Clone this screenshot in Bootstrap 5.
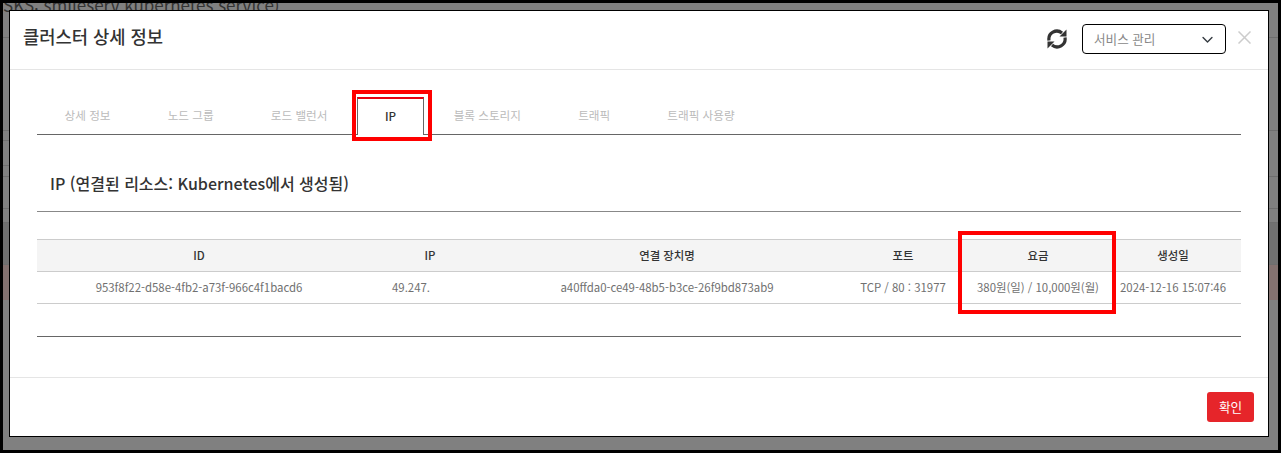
<!doctype html>
<html lang="ko"><head><meta charset="utf-8">
<link href="https://cdn.jsdelivr.net/npm/bootstrap@5.3.0/dist/css/bootstrap.min.css" rel="stylesheet">
<style>
html,body{height:453px;overflow:hidden}
body{font-family:"Noto Sans CJK KR","Noto Sans",sans-serif;background:#808080;color:#333}
.shot{position:relative;height:453px;border:3px solid #000;padding:7px 9px 13px 6px;overflow:hidden}
.behind{position:absolute;inset:0;overflow:hidden}
.behind-t{position:absolute;left:0;top:-10px;font-size:17px;color:#333;white-space:nowrap;line-height:24px}
.rw{border-bottom:1px solid #6e6e6e}
.rw-short{width:8px}
.rw-tint{background:#717171}
.rw-red{background:#847270}
.dlg{position:relative;height:427px;border:1px solid #000;background:#fff;display:flex;flex-direction:column}
.dlg-head{height:59px;padding:0 17px 2px 13px;border-bottom:1px solid #e5e5e5}
.dlg-title{font-size:17.7px;font-weight:500;color:#333;margin:0 0 5px}
.svc{width:144px;height:30px;border:1px solid #000;border-radius:4px;font-size:12.6px;color:#888;padding:0 36px 0 11px;margin-left:14px;
 background:#fff url("data:image/svg+xml,%3csvg xmlns='http://www.w3.org/2000/svg' viewBox='0 0 16 16'%3e%3cpath fill='none' stroke='%23343a40' stroke-linecap='round' stroke-linejoin='round' stroke-width='2' d='m1.5 5 6.5 6.5L14.500 5'/%3e%3c/svg%3e") no-repeat right 11px center/13px 11px;appearance:none}
.dlg-x{margin-left:12px;margin-bottom:4px;display:block}
.dlg-body{flex:1;padding:0 27px}
.tabs-row{height:65px;align-items:flex-end;border-bottom:1px solid #666;gap:2px}
.tab-i{height:37px;display:flex;align-items:center;padding:0 27.6px;font-size:11.6px;color:#bbb;text-decoration:none;white-space:nowrap}
.tab-i.on{padding:0 27px;margin-bottom:-1px;height:38px;border:1px solid #666;border-top:2px solid #e60012;border-bottom:0;background:#fff;color:#333;font-weight:500}
.sec-h{font-size:16px;font-weight:500;color:#333;height:77px;margin:0;padding:22px 13px 0;display:flex;align-items:center;border-bottom:1px solid #888}
.ip-t{margin:27px 0 0;font-size:11.4px;table-layout:fixed;width:100%;border-top:1px solid #ccc}
.ip-t th{background:#f4f4f4;font-weight:500;color:#333;height:32px;padding:0;text-align:center;vertical-align:middle;border-bottom:1px solid #ccc}
.ip-t td{height:32px;padding:0;text-align:center;vertical-align:middle;color:#707070;border-bottom:1px solid #ccc;white-space:nowrap}
.ip-t td.ip-cut{padding-right:38px}
.rule-b{border-top:1px solid #666;margin-top:32px}
.dlg-foot{height:59px;border-top:1px solid #e5e5e5;padding:0 14px;align-items:center}
.ok{background:#e6252a;border:0;color:#fff;font-size:12.6px;width:47px;height:30px;padding:0;border-radius:3px}
.mark-a{position:absolute;border:4px solid #f00;pointer-events:none}
.mark-1{left:349px;top:87px;width:80px;height:51px}
.mark-2{left:955px;top:228px;width:158px;height:83px}
</style></head><body>
<div class="shot">
 <div class="behind">
  <div class="behind-t">SKS: smileserv kubernetes service)</div>
  <div class="rw" style="height:35px"></div>
  <div class="rw" style="height:93px"></div>
  <div class="rw rw-short" style="height:10px"></div>
  <div class="rw rw-short" style="height:25px"></div>
  <div class="rw" style="height:11px"></div>
  <div class="rw" style="height:32px"></div>
  <div class="rw" style="height:14px"></div>
  <div class="rw rw-tint" style="height:42px"></div>
  <div class="rw-red" style="height:35px"></div>
 </div>
 <div class="dlg">
  <div class="dlg-head d-flex align-items-center">
   <h5 class="dlg-title flex-grow-1">클러스터 상세 정보</h5>
   <svg width="22" height="22" viewBox="0 0 22 22" aria-hidden="true"><g fill="none" stroke="#333" stroke-width="3.2"><path d="M3 12.5A8 8 0 0 1 16 5"/><path d="M19 9.500A8 8 0 0 1 6 17"/></g><path d="M13.500 8.500h7v-7z" fill="#333"/><path d="M8.500 13.500h-7v7z" fill="#333"/></svg>
   <select class="svc"><option>서비스 관리</option></select>
   <svg class="dlg-x" width="13" height="13" viewBox="0 0 13 13" aria-hidden="true"><path d="M.5.5l12 12M12.500.5l-12 12" stroke="#ccc" stroke-width="1.500" fill="none"/></svg>
  </div>
  <div class="dlg-body">
   <div class="tabs-row d-flex">
    <a class="tab-i">상세 정보</a><a class="tab-i">노드 그룹</a><a class="tab-i">로드 밸런서</a><a class="tab-i on">IP</a><a class="tab-i">블록 스토리지</a><a class="tab-i">트래픽</a><a class="tab-i">트래픽 사용량</a>
   </div>
   <h5 class="sec-h">IP (연결된 리소스: Kubernetes에서 생성됨)</h5>
   <table class="ip-t"><colgroup><col style="width:324px"><col style="width:138px"><col style="width:336px"><col style="width:136px"><col style="width:134px"><col></colgroup>
    <thead><tr><th>ID</th><th>IP</th><th>연결 장치명</th><th>포트</th><th>요금</th><th>생성일</th></tr></thead>
    <tbody><tr><td>953f8f22-d58e-4fb2-a73f-966c4f1bacd6</td><td class="ip-cut">49.247.</td><td>a40ffda0-ce49-48b5-b3ce-26f9bd873ab9</td><td>TCP / 80 : 31977</td><td>380원(일) / 10,000원(월)</td><td>2024-12-16 15:07:46</td></tr></tbody>
   </table>
   <div class="rule-b"></div>
  </div>
  <div class="dlg-foot d-flex justify-content-end"><button class="ok btn">확인</button></div>
 </div>
 <div class="mark-a mark-1"></div>
 <div class="mark-a mark-2"></div>
</div>
</body></html>
